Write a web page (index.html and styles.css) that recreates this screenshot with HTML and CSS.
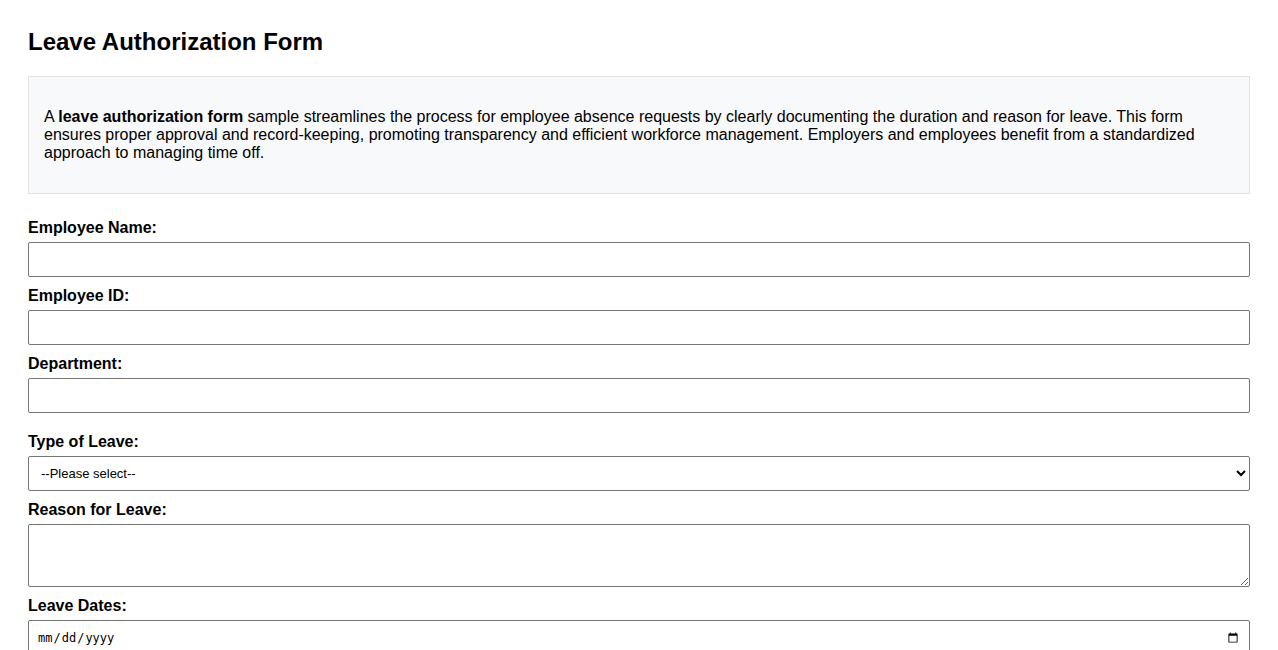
FILE: index.html
```html
<!DOCTYPE html>
<html lang="en">
<head>
<meta charset="utf-8">
<title>Leave Authorization Form</title>
<link rel="stylesheet" href="styles.css">
</head>
<body>
<div class="page">
  <h1 class="title">Leave Authorization Form</h1>
  <div class="intro">
    <p>A <strong>leave authorization form</strong> sample streamlines the process for employee absence requests by clearly documenting the duration and reason for leave. This form ensures proper approval and record-keeping, promoting transparency and efficient workforce management. Employers and employees benefit from a standardized approach to managing time off.</p>
  </div>
  <form class="form">
    <label class="label" for="name">Employee Name:</label>
    <input class="field" type="text" id="name">
    <label class="label" for="eid">Employee ID:</label>
    <input class="field" type="text" id="eid">
    <label class="label" for="dept">Department:</label>
    <input class="field" type="text" id="dept">
    <label class="label label-spaced" for="type">Type of Leave:</label>
    <select class="field select" id="type">
      <option>--Please select--</option>
      <option>Annual Leave</option>
      <option>Sick Leave</option>
      <option>Personal Leave</option>
      <option>Unpaid Leave</option>
    </select>
    <label class="label" for="reason">Reason for Leave:</label>
    <textarea class="field area" id="reason"></textarea>
    <label class="label" for="dates">Leave Dates:</label>
    <input class="field date" type="date" id="dates">
    <label class="label" for="sig">Employee Signature:</label>
    <input class="field" type="text" id="sig">
  </form>
</div>
</body>
</html>
```
FILE: styles.css
```css
html, body {
  margin: 0;
  padding: 0;
  background: #ffffff;
}
body {
  font-family: "Liberation Sans", Arial, sans-serif;
  font-size: 16px;
  color: #000000;
}
.page {
  padding: 28px;
}
.title {
  font-size: 24px;
  font-weight: bold;
  margin: 0 0 20px 0;
  line-height: 28px;
}
.intro {
  background: #f8f9fa;
  border: 1px solid #e2e4e6;
  padding: 15px;
}
.intro p {
  margin: 16px 0 16px 0;
  line-height: 18px;
}
.form {
  display: flex;
  flex-direction: column;
  padding-top: 24px;
}
.label {
  display: block;
  font-weight: bold;
  line-height: 20px;
  margin-bottom: 4px;
}
.label-spaced {
  margin-top: 10px;
}
.field {
  box-sizing: border-box;
  width: 100%;
  height: 35px;
  border: 1px solid #767676;
  border-radius: 2px;
  padding: 8px;
  margin: 0 0 9px 0;
  font-family: "Liberation Sans", Arial, sans-serif;
  font-size: 13px;
  background: #ffffff;
  color: #000000;
}
.select {
  padding: 0 4px 0 8px;
}
.area {
  height: 63px;
  resize: both;
  font-family: "Liberation Mono", monospace;
}
.date {
  font-family: "DejaVu Sans Mono", monospace;
  font-size: 12px;
}
```
